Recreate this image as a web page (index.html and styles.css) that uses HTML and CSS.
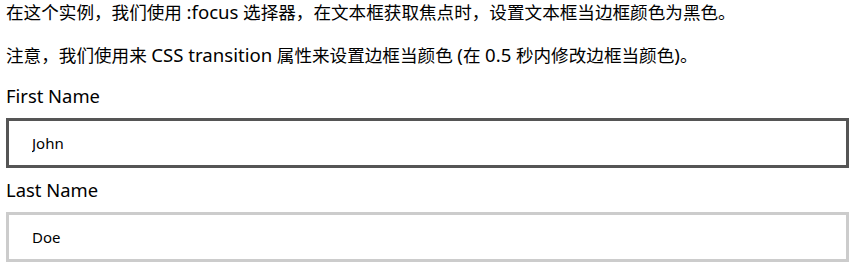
FILE: index.html
```html
<!DOCTYPE html>
<html lang="zh-CN">
<head>
<meta charset="utf-8">
<title>:focus 示例</title>
<link rel="stylesheet" href="styles.css">
</head>
<body>
<p class="intro">在这个实例，我们使用 <span class="lat">:focus</span> 选择器，在文本框获取焦点时，设置文本框当边框颜色为黑色。</p>
<p class="intro note">注意，我们使用来 <span class="lat">CSS transition</span> 属性来设置边框当颜色 <span class="lat">(</span>在 <span class="lat">0.5</span> 秒内修改边框当颜色<span class="lat">)</span>。</p>
<form class="form">
  <label class="label" for="fname">First Name</label>
  <input class="field field-active" type="text" id="fname" name="fname" value="John" autofocus>
  <label class="label" for="lname">Last Name</label>
  <input class="field" type="text" id="lname" name="lname" value="Doe">
</form>
</body>
</html>
```
FILE: styles.css
```css
html, body {
  background: #ffffff;
}

body {
  margin: 0 13px 0 6px;
  font-family: "Noto Sans", "Noto Sans CJK SC", sans-serif;
  font-size: 18.4px;
  line-height: 26px;
  color: #000000;
}

.intro {
  margin: 0 0 19px 0;
  font-size: 17.6px;
  line-height: 23px;
}

.intro.note {
  margin-bottom: 16px;
}

.lat {
  font-size: 18.6px;
}

.form {
  margin: 0;
}

.label {
  line-height: 26px;
}

.field {
  display: block;
  width: 100%;
  height: 50px;
  box-sizing: border-box;
  margin: 9px 0;
  padding: 0 23px;
  border: 3px solid #cccccc;
  border-radius: 0;
  outline: none;
  background: #ffffff;
  font-family: "Noto Sans", sans-serif;
  font-size: 15px;
  color: #000000;
}

.field-active,
.field:focus {
  border-color: #555555;
}
```
